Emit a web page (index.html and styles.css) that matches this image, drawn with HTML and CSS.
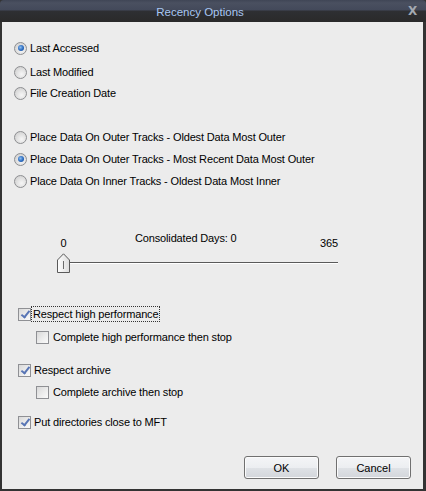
FILE: index.html
```html
<!DOCTYPE html>
<html>
<head>
<meta charset="utf-8">
<link rel="stylesheet" href="styles.css">
</head>
<body>
<div class="window">
  <div class="titlebar">
    <span class="title">Recency Options</span>
    <span class="close">X</span>
  </div>
  <div class="client">
    <div class="row r1"><span class="radio on"></span><span class="lbl">Last Accessed</span></div>
    <div class="row r2"><span class="radio"></span><span class="lbl">Last Modified</span></div>
    <div class="row r3"><span class="radio"></span><span class="lbl">File Creation Date</span></div>

    <div class="row r4"><span class="radio"></span><span class="lbl">Place Data On Outer Tracks - Oldest Data Most Outer</span></div>
    <div class="row r5"><span class="radio on"></span><span class="lbl">Place Data On Outer Tracks - Most Recent Data Most Outer</span></div>
    <div class="row r6"><span class="radio"></span><span class="lbl">Place Data On Inner Tracks - Oldest Data Most Inner</span></div>

    <div class="slider">
      <div class="slabels">
        <span class="smin">0</span>
        <span class="scap">Consolidated Days: 0</span>
        <span class="sfill"></span>
        <span class="smax">365</span>
      </div>
      <div class="strack">
        <svg class="thumb" width="13" height="20" viewBox="0 0 13 20">
          <defs>
            <linearGradient id="tg" x1="0" y1="0" x2="1" y2="0">
              <stop offset="0" stop-color="#ffffff"/>
              <stop offset="1" stop-color="#dcdcdc"/>
            </linearGradient>
          </defs>
          <polygon points="0.5,7 6.5,0.8 12.5,7 12.5,19.5 0.5,19.5" fill="url(#tg)" stroke="#5a5a5a" stroke-width="1"/>
          <line x1="6.5" y1="8" x2="6.5" y2="16" stroke="#6a6a6a" stroke-width="1"/>
        </svg>
        <span class="line"></span>
      </div>
    </div>

    <div class="row c1"><span class="check on"></span><span class="lbl focus">Respect high performance</span></div>
    <div class="row c2 sub"><span class="check"></span><span class="lbl">Complete high performance then stop</span></div>
    <div class="row c3"><span class="check on"></span><span class="lbl">Respect archive</span></div>
    <div class="row c4 sub"><span class="check"></span><span class="lbl">Complete archive then stop</span></div>
    <div class="row c5"><span class="check on"></span><span class="lbl">Put directories close to MFT</span></div>

    <div class="buttons">
      <button class="btn">OK</button>
      <button class="btn">Cancel</button>
    </div>
  </div>
</div>
</body>
</html>
```
FILE: styles.css
```css
html, body {
  margin: 0;
  padding: 0;
  background: #2f2f2f;
}
body {
  font-family: "Liberation Sans", Arial, sans-serif;
  font-size: 11px;
  letter-spacing: -0.15px;
  color: #000;
}
.window {
  width: 426px;
  height: 491px;
  display: flex;
  flex-direction: column;
  background: #333333;
}
.titlebar {
  height: 22px;
  flex: none;
  display: flex;
  align-items: center;
  justify-content: center;
  position: relative;
  background: linear-gradient(to bottom, #404656 0px, #4a5060 3px, #43495a 10px, #2e2f33 11px, #2a2a2a 22px);
  border-radius: 4px 4px 0 0;
}
.title {
  color: #a8c6f2;
  font-size: 11.5px;
  letter-spacing: 0;
  margin-left: -26px;
  margin-top: 1px;
}
.close {
  position: absolute;
  right: 9px;
  top: 4px;
  color: #a3a9b2;
  font-family: "DejaVu Sans", sans-serif;
  font-weight: bold;
  font-size: 12px;
}
.client {
  flex: 1;
  margin: 0 3px 2px 2px;
  background: #ececec;
  display: flex;
  flex-direction: column;
  padding-top: 18px;
}
.row {
  display: flex;
  align-items: center;
  height: 16px;
  padding-left: 12px;
}
.row .lbl { margin-left: 3px; white-space: nowrap; }
.r2 { margin-top: 8px; }
.r3 { margin-top: 5px; }
.r4 { margin-top: 28px; }
.r5 { margin-top: 6px; }
.r6 { margin-top: 6px; }

.radio {
  width: 13px;
  height: 13px;
  box-sizing: border-box;
  border-radius: 50%;
  border: 1px solid #8d8e91;
  background: radial-gradient(circle at 60% 65%, #f6f6f6 0, #e2e2e2 45%, #c9c9c9 100%);
  position: relative;
  flex: none;
}
.radio.on::after {
  content: "";
  position: absolute;
  left: 2.5px;
  top: 2.5px;
  width: 6px;
  height: 6px;
  border-radius: 50%;
  background: radial-gradient(circle at 40% 40%, #8ec0f0 0, #2a6ac0 55%, #1a4a8a 100%);
}

.slider {
  margin-top: 43px;
  margin-left: 55px;
  width: 281px;
}
.slabels {
  display: flex;
  height: 13px;
  line-height: 13px;
}
.smin {
  width: 13px;
  text-align: center;
  padding-top: 5px;
}
.scap { margin-left: 65px; }
.sfill { flex: 1; }
.smax { padding-top: 5px; }
.strack {
  margin-top: 8px;
  height: 20px;
  display: flex;
  align-items: flex-start;
}
.thumb { flex: none; display: block; }
.line {
  flex: 1;
  height: 1px;
  margin-top: 9px;
  background: #5a5a5a;
  box-shadow: 0 1px 0 #ffffff;
}

.check {
  width: 13px;
  height: 13px;
  box-sizing: border-box;
  border: 1px solid #8f9094;
  background: linear-gradient(135deg, #d9d9d9 0%, #eeeeee 60%, #fafafa 100%);
  flex: none;
  position: relative;
}
.check.on::after {
  content: "";
  position: absolute;
  left: 3.5px;
  top: 0.5px;
  width: 3px;
  height: 7px;
  border: solid #5875b5;
  border-width: 0 2px 2px 0;
  transform: rotate(38deg);
}
.c1 { margin-top: 33px; padding-left: 16px; }
.c2 { margin-top: 7px; }
.c3 { margin-top: 17px; padding-left: 16px; }
.c4 { margin-top: 6px; }
.c5 { margin-top: 14px; padding-left: 16px; }
.sub { padding-left: 34px; }
.sub .lbl { margin-left: 4px; }
.focus {
  outline: 1px dotted #333;
  outline-offset: 0;
  padding: 0 1px;
  margin-left: 1px !important;
  line-height: 14px;
}

.buttons {
  margin-top: auto;
  margin-bottom: 10px;
  margin-right: 12px;
  display: flex;
  justify-content: flex-end;
  gap: 17px;
}
.btn {
  width: 75px;
  height: 23px;
  border: 1px solid #707070;
  border-radius: 3px;
  background: linear-gradient(to bottom, #f4f5f7 0%, #eceef1 50%, #dfe2e6 51%, #d3d6db 100%);
  font-family: "Liberation Sans", Arial, sans-serif;
  font-size: 11px;
  color: #000;
  padding: 0;
  box-shadow: inset 0 0 0 1px #fbfbfb;
}
```
